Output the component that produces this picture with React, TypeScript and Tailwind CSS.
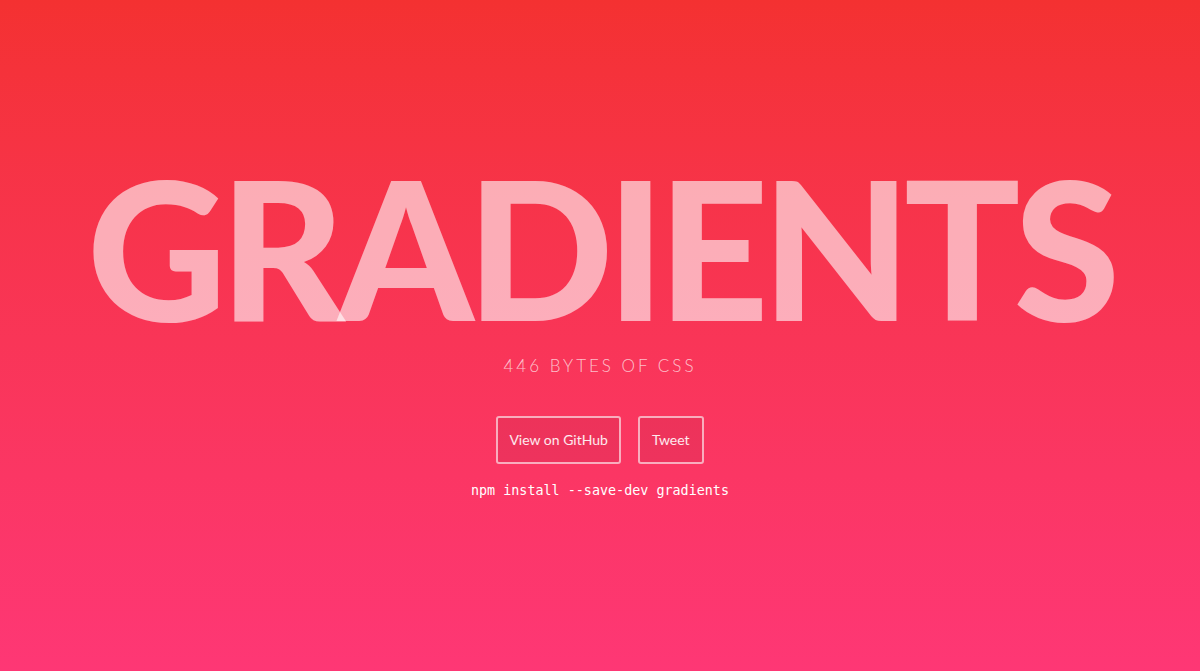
export default function App() {
  return (
    <div className="min-h-[671px] w-full bg-gradient-to-b from-[#f43131] to-[#fe3775] flex flex-col items-center text-white">
      <h1 className="mt-[172px] text-[193px] leading-[150px] font-black tracking-[-7px] text-white/60 font-['Lato',sans-serif]">
        {'GRADIENTS'.split('').map((c, i) => (
          <span key={i} className="inline-block">{c}</span>
        ))}
      </h1>
      <p className="mt-[31px] text-[17px] font-light tracking-[3px] text-white/70 font-['Lato',sans-serif]">
        446 BYTES OF CSS
      </p>
      <div className="mt-[37px] flex gap-[17px] font-['Lato',sans-serif] text-[14px] text-white/90">
        <a className="h-[48px] px-[11px] flex items-center border-2 border-white/60 rounded-[3px] bg-black/5">
          View on GitHub
        </a>
        <a className="h-[48px] px-[12px] flex items-center border-2 border-white/60 rounded-[3px] bg-black/5">
          Tweet
        </a>
      </div>
      <code className="mt-[17px] text-[13.4px] font-['DejaVu_Sans_Mono',monospace]">
        npm install --save-dev gradients
      </code>
    </div>
  );
}
